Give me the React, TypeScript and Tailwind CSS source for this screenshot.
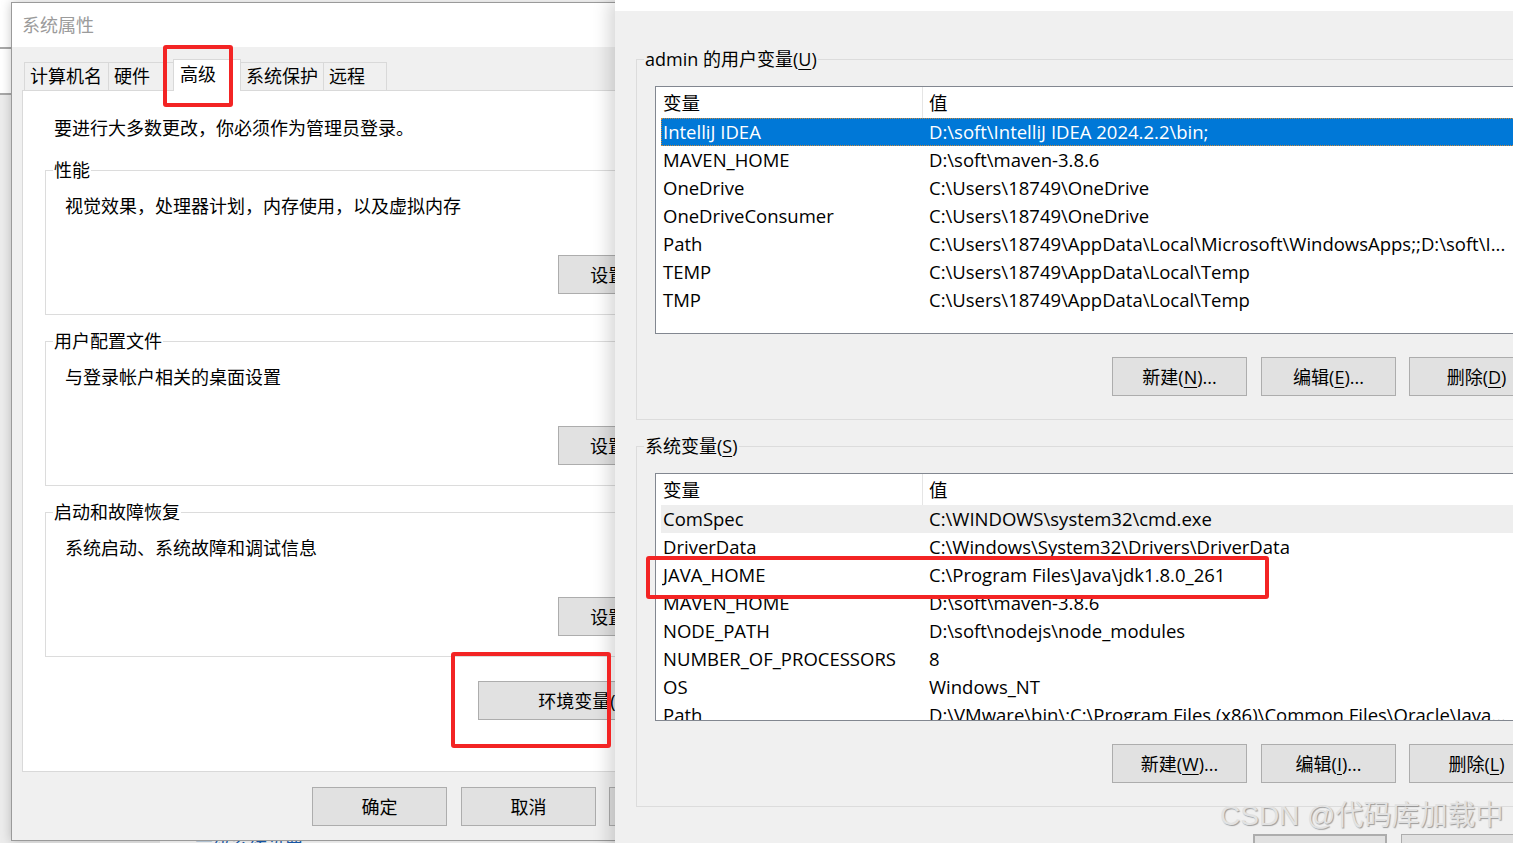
import React from 'react';

type Row = [string, string];

const userRows: Row[] = [
  ['IntelliJ IDEA', 'D:\\soft\\IntelliJ IDEA 2024.2.2\\bin;'],
  ['MAVEN_HOME', 'D:\\soft\\maven-3.8.6'],
  ['OneDrive', 'C:\\Users\\18749\\OneDrive'],
  ['OneDriveConsumer', 'C:\\Users\\18749\\OneDrive'],
  ['Path', 'C:\\Users\\18749\\AppData\\Local\\Microsoft\\WindowsApps;;D:\\soft\\I...'],
  ['TEMP', 'C:\\Users\\18749\\AppData\\Local\\Temp'],
  ['TMP', 'C:\\Users\\18749\\AppData\\Local\\Temp'],
];

const sysRows: Row[] = [
  ['ComSpec', 'C:\\WINDOWS\\system32\\cmd.exe'],
  ['DriverData', 'C:\\Windows\\System32\\Drivers\\DriverData'],
  ['JAVA_HOME', 'C:\\Program Files\\Java\\jdk1.8.0_261'],
  ['MAVEN_HOME', 'D:\\soft\\maven-3.8.6'],
  ['NODE_PATH', 'D:\\soft\\nodejs\\node_modules'],
  ['NUMBER_OF_PROCESSORS', '8'],
  ['OS', 'Windows_NT'],
  ['Path', 'D:\\VMware\\bin\\;C:\\Program Files (x86)\\Common Files\\Oracle\\Java...'],
];

const tabs = [
  { label: '计算机名', w: 'w-[84px]' },
  { label: '硬件', w: 'w-[65px]' },
  { label: '高级', w: 'w-[68px]', sel: true },
  { label: '系统保护', w: 'w-[82px]' },
  { label: '远程', w: 'w-[64px]' },
];

// mnemonic letter, underlined like win32 buttons
const M = ({ c }: { c: string }) => <span className="underline underline-offset-[3px]">{c}</span>;

const Btn: React.FC<{ children: React.ReactNode; className?: string }> = ({ children, className = '' }) => (
  <div
    className={`flex h-[39px] shrink-0 items-center justify-center border border-[#adadad] bg-[#e1e1e1] leading-[24px] whitespace-nowrap ${className}`}
  >
    {children}
  </div>
);

const Group: React.FC<{ title: React.ReactNode; bg: string; className?: string; children: React.ReactNode }> = ({
  title,
  bg,
  className = '',
  children,
}) => (
  <div className={`relative border border-[#dcdcdc] ${className}`}>
    <span className={`absolute left-[7px] top-[-13px] px-[1px] leading-[24px] whitespace-nowrap ${bg}`}>{title}</span>
    {children}
  </div>
);

const VarList: React.FC<{ rows: Row[]; selected?: number; hover?: number }> = ({ rows, selected, hover }) => (
  <div className="h-[248px] overflow-hidden border border-[#828790] bg-white text-[18.5px]">
    <div className="flex h-[31px] items-center">
      <div className="flex h-full w-[267px] items-center border-r border-[#e5e5e5] pl-[7px]">变量</div>
      <div className="pl-[6px]">值</div>
    </div>
    <div className="pl-[5px]">
      {rows.map(([k, v], i) => (
        <div
          key={k + i}
          className={`flex h-[28px] items-center overflow-hidden whitespace-nowrap border ${
            i === selected
              ? 'border-dotted border-[#c98a3e] bg-[#0078d7] text-white'
              : i === hover
              ? 'border-transparent bg-[#eeeeee]'
              : 'border-transparent'
          }`}
        >
          <div className="w-[260px] shrink-0 pl-[1px]">{k}</div>
          <div className="pl-[7px]">{v}</div>
        </div>
      ))}
    </div>
  </div>
);

const SysPropsDialog = () => (
  <div className="absolute left-[11px] top-[2px] z-10 flex h-[839px] w-[745px] flex-col border border-[#9a9a9a] bg-[#f0f0f0] shadow-[0_0_10px_rgba(0,0,0,0.22)]">
    <div className="flex h-[44px] shrink-0 items-center bg-white pl-[10px] text-[#9b9b9b]">系统属性</div>

    <div className="ml-[12px] mt-[12px] flex h-[31px] items-end">
      {tabs.map((t, i) =>
        t.sel ? (
          <div
            key={t.label}
            className={`relative z-10 mb-[-1px] flex h-[32px] items-center border-x border-t border-[#d9d9d9] bg-white pb-[2px] pl-[6px] ${t.w}`}
          >
            {t.label}
          </div>
        ) : (
          <div
            key={t.label}
            className={`flex h-[28px] items-center border-t border-[#d9d9d9] bg-[#f0f0f0] pl-[5px] ${t.w} ${
              i === 3 ? '' : 'border-l'
            } ${i === 4 ? 'border-r' : ''}`}
          >
            {t.label}
          </div>
        )
      )}
    </div>

    <div className="ml-[10px] mr-[11px] flex h-[682px] flex-col border border-[#d9d9d9] bg-white">
      <div className="pl-[31px] pt-[25px] leading-[24px]">要进行大多数更改，你必须作为管理员登录。</div>

      <Group title="性能" bg="bg-white" className="ml-[22px] mr-[22px] mt-[30px] pb-[20px] pl-[19px] pt-[23px]">
        <div className="leading-[24px]">视觉效果，处理器计划，内存使用，以及虚拟内存</div>
        <Btn className="ml-[493px] mt-[37px] w-[135px]">
          设置(<M c="S" />)...
        </Btn>
      </Group>

      <Group title="用户配置文件" bg="bg-white" className="ml-[22px] mr-[22px] mt-[26px] pb-[20px] pl-[19px] pt-[23px]">
        <div className="leading-[24px]">与登录帐户相关的桌面设置</div>
        <Btn className="ml-[493px] mt-[37px] w-[135px]">
          设置(<M c="E" />)...
        </Btn>
      </Group>

      <Group title="启动和故障恢复" bg="bg-white" className="ml-[22px] mr-[22px] mt-[26px] pb-[20px] pl-[19px] pt-[23px]">
        <div className="leading-[24px]">系统启动、系统故障和调试信息</div>
        <Btn className="ml-[493px] mt-[37px] w-[135px]">
          设置(<M c="T" />)...
        </Btn>
      </Group>

      <Btn className="ml-[455px] mt-[24px] w-[231px]">
        环境变量(<M c="N" />)...
      </Btn>
    </div>

    <div className="mt-[15px] flex justify-end gap-[13px] pr-[11px]">
      <Btn className="mr-[1px] w-[135px]">确定</Btn>
      <Btn className="w-[135px]">取消</Btn>
      <Btn className="w-[135px]">
        应用(<M c="A" />)
      </Btn>
    </div>
  </div>
);

const EnvVarsDialog = () => (
  <div className="absolute left-[615px] top-0 z-20 flex h-[900px] w-[970px] flex-col bg-[#f0f0f0] shadow-[-6px_0_16px_rgba(0,0,0,0.16)]">
    <div className="h-[11px] shrink-0 bg-white" />

    <Group
      title={
        <>
          admin 的用户变量(<M c="U" />)
        </>
      }
      bg="bg-[#f0f0f0]"
      className="ml-[21px] mr-[22px] mt-[48px] px-[18px] pb-[23px] pt-[26px]"
    >
      <VarList rows={userRows} selected={0} />
      <div className="mt-[23px] flex justify-end gap-[13px]">
        <Btn className="mr-[1px] w-[135px]">
          新建(<M c="N" />)...
        </Btn>
        <Btn className="w-[135px]">
          编辑(<M c="E" />)...
        </Btn>
        <Btn className="w-[135px]">
          删除(<M c="D" />)
        </Btn>
      </div>
    </Group>

    <Group
      title={
        <>
          系统变量(<M c="S" />)
        </>
      }
      bg="bg-[#f0f0f0]"
      className="ml-[21px] mr-[22px] mt-[26px] px-[18px] pb-[23px] pt-[26px]"
    >
      <VarList rows={sysRows} hover={0} />
      <div className="mt-[23px] flex justify-end gap-[13px]">
        <Btn className="mr-[1px] w-[135px]">
          新建(<M c="W" />)...
        </Btn>
        <Btn className="w-[135px]">
          编辑(<M c="I" />)...
        </Btn>
        <Btn className="w-[135px]">
          删除(<M c="L" />)
        </Btn>
      </div>
    </Group>

    <div className="mt-[27px] flex justify-end gap-[14px] pr-[49px]">
      <Btn className="w-[134px] border-2 border-[#0078d7]">确定</Btn>
      <Btn className="w-[135px]">取消</Btn>
    </div>
  </div>
);

export default function App() {
  return (
    <div className="relative h-[843px] w-[1513px] overflow-hidden bg-white font-['Open_Sans','Noto_Sans_CJK_SC',sans-serif] text-[18px] text-black">
      {/* bits of the control panel window behind */}
      <div className="absolute left-0 top-[47px] h-[46px] w-[160px] border-t-2 border-[#a8a8a8] bg-white" />
      <div className="absolute bottom-0 left-0 top-[93px] w-[160px] border-t-2 border-[#a8a8a8] bg-[#ececec]" />
      <div className="absolute left-[195px] top-[834px] text-[#1a5fb4]">高级系统设置</div>

      <SysPropsDialog />
      <EnvVarsDialog />

      {/* red annotation boxes */}
      <div className="absolute left-[163px] top-[45px] z-30 h-[62px] w-[70px] rounded-[3px] border-4 border-[#f32424]" />
      <div className="absolute left-[451px] top-[652px] z-30 h-[96px] w-[160px] rounded-[3px] border-4 border-[#f32424]" />
      <div className="absolute left-[646px] top-[556px] z-30 h-[43px] w-[623px] rounded-[3px] border-4 border-[#f32424]" />

      <div className="absolute left-[1220px] top-[798px] z-30 whitespace-nowrap font-['Liberation_Sans','Noto_Sans_CJK_SC',sans-serif] text-[28px] leading-[36px] text-[#e2e2e2] [text-shadow:1px_1px_1px_rgba(0,0,0,0.35)]">
        CSDN @代码库加载中
      </div>
    </div>
  );
}
